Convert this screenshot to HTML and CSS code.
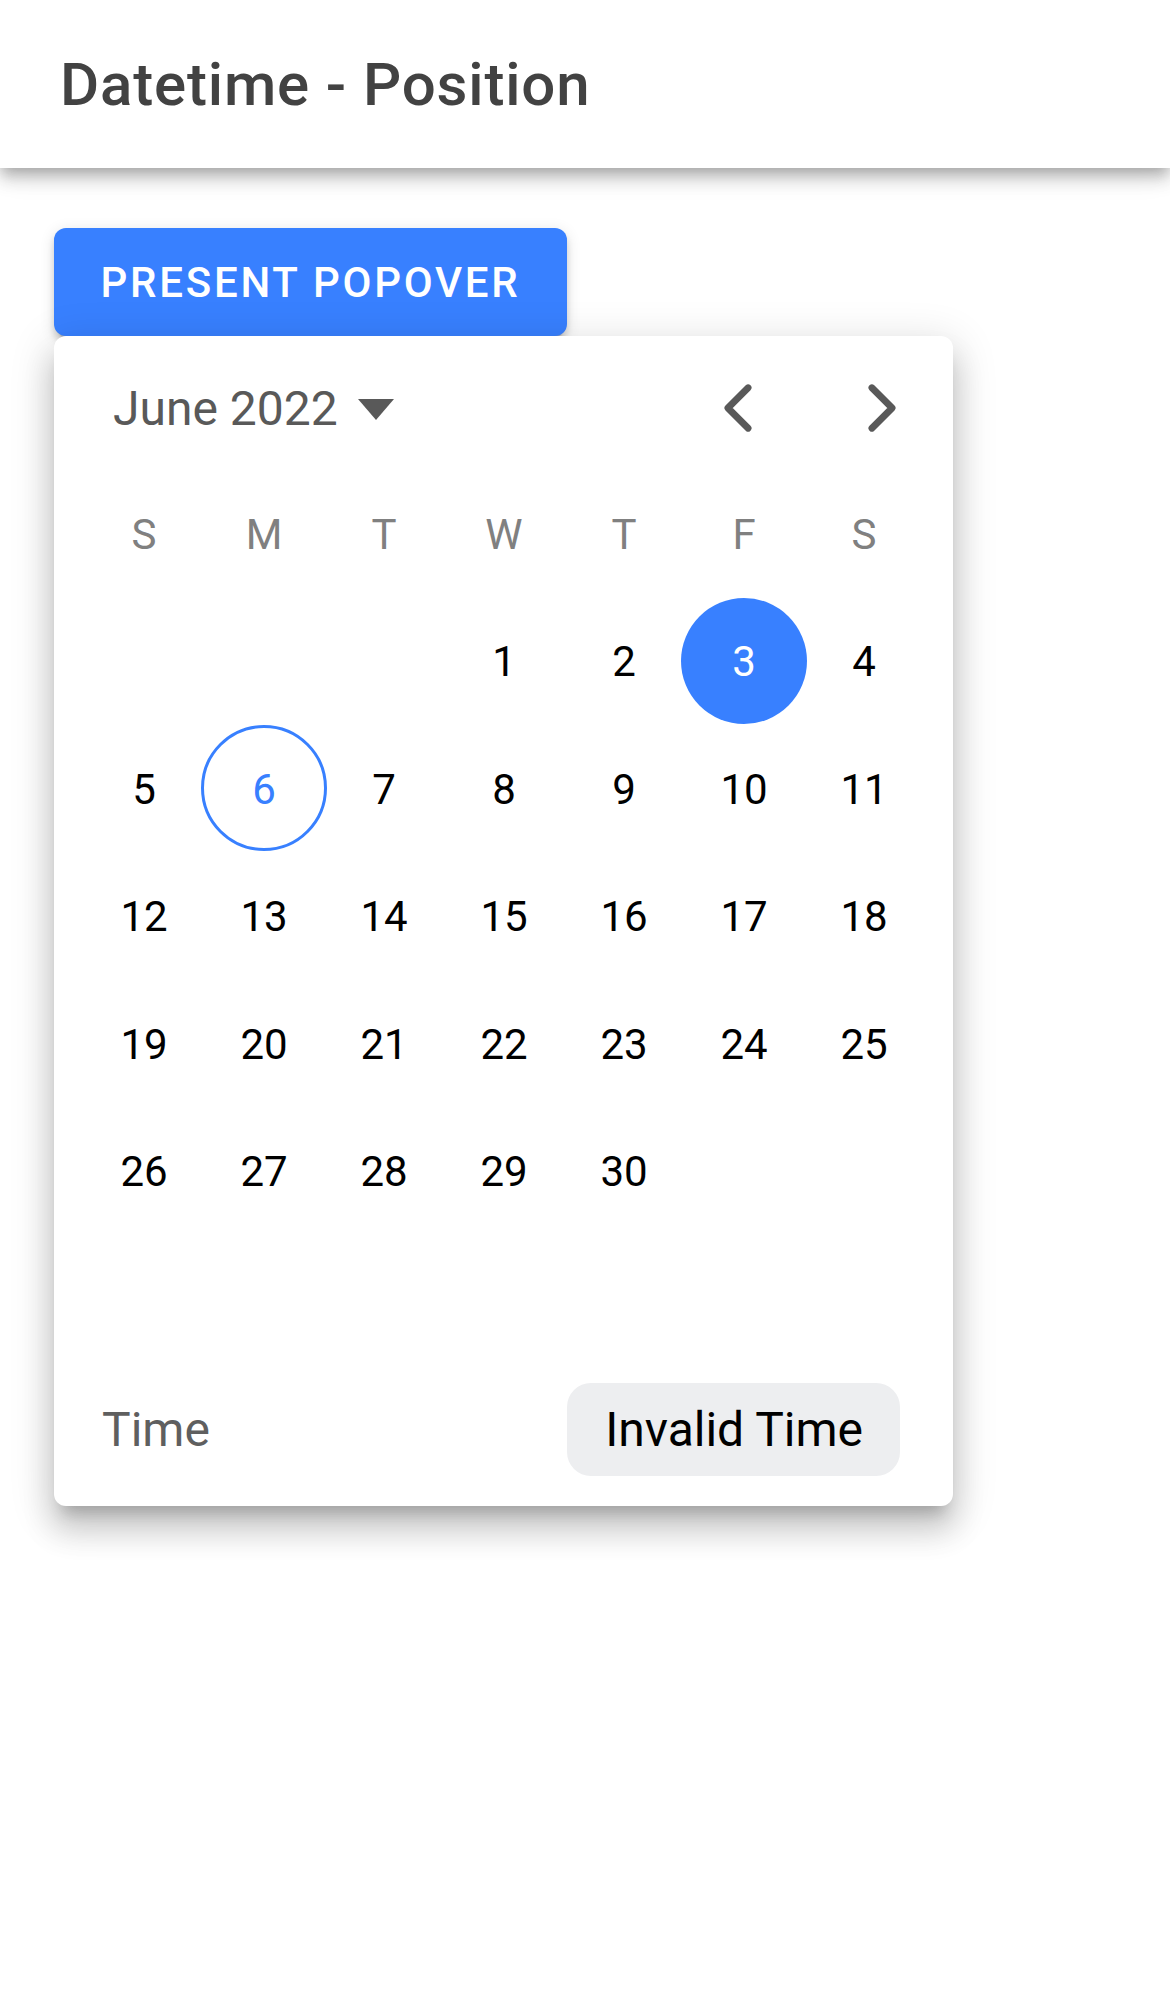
FILE: index.html
```html
<!DOCTYPE html>
<html lang="en">
<head>
<meta charset="utf-8">
<title>Datetime - Position</title>
<link rel="stylesheet" href="styles.css">
</head>
<body>
<header class="toolbar">
  <h1 class="title">Datetime - Position</h1>
</header>
<main class="content">
  <button class="btn" type="button">PRESENT POPOVER</button>
  <div class="popover">
    <div class="cal-header">
      <div class="month-year">
        <span>June 2022</span>
        <svg class="caret" viewBox="0 0 36 21" width="36" height="21"><polygon points="0,0 36,0 18,21" fill="#595959"/></svg>
      </div>
      <div class="nav">
        <svg class="chev" viewBox="0 0 512 512" width="72" height="72"><polyline points="328,112 184,256 328,400" fill="none" stroke="#595959" stroke-width="48" stroke-linecap="round" stroke-linejoin="round"/></svg>
        <svg class="chev" viewBox="0 0 512 512" width="72" height="72"><polyline points="184,112 328,256 184,400" fill="none" stroke="#595959" stroke-width="48" stroke-linecap="round" stroke-linejoin="round"/></svg>
      </div>
    </div>
    <div class="weekdays">
      <span>S</span><span>M</span><span>T</span><span>W</span><span>T</span><span>F</span><span>S</span>
    </div>
    <div class="grid">
      <span></span><span></span><span></span>
      <span class="day">1</span><span class="day">2</span><span class="day selected">3</span><span class="day">4</span>
      <span class="day">5</span><span class="day today">6</span><span class="day">7</span><span class="day">8</span><span class="day">9</span><span class="day">10</span><span class="day">11</span>
      <span class="day">12</span><span class="day">13</span><span class="day">14</span><span class="day">15</span><span class="day">16</span><span class="day">17</span><span class="day">18</span>
      <span class="day">19</span><span class="day">20</span><span class="day">21</span><span class="day">22</span><span class="day">23</span><span class="day">24</span><span class="day">25</span>
      <span class="day">26</span><span class="day">27</span><span class="day">28</span><span class="day">29</span><span class="day">30</span>
    </div>
    <div class="time-row">
      <span class="time-label">Time</span>
      <span class="time-pill">Invalid Time</span>
    </div>
  </div>
</main>
</body>
</html>
```
FILE: styles.css
```css
* { box-sizing: border-box; }
html, body {
  margin: 0;
  padding: 0;
  background: #fff;
  font-family: Roboto, "Noto Sans", "Liberation Sans", sans-serif;
}
body { width: 1170px; min-height: 1992px; position: relative; }

.toolbar {
  height: 168px;
  display: flex;
  align-items: center;
  padding-left: 60px;
  background: #fff;
  position: relative;
  z-index: 2;
  box-shadow: 0 6px 12px -3px rgba(0,0,0,.2), 0 12px 15px 0 rgba(0,0,0,.14), 0 3px 30px 0 rgba(0,0,0,.12);
}
.title {
  margin: 0;
  font-size: 60px;
  font-weight: 500;
  letter-spacing: 0.85px;
  color: #424242;
}

.content {
  position: relative;
  padding: 60px 54px;
}

.btn {
  display: block;
  height: 108px;
  width: 513px;
  padding: 0 44px;
  border: 0;
  border-radius: 12px;
  background: #3880ff;
  color: #fff;
  font-family: Roboto, "Noto Sans", sans-serif;
  font-size: 42px;
  font-weight: 500;
  letter-spacing: 2.75px;
  box-shadow: 0 9px 3px -6px rgba(0,0,0,.2), 0 6px 6px 0 rgba(0,0,0,.14), 0 3px 15px 0 rgba(0,0,0,.12);
}

.popover {
  position: absolute;
  top: 168px;
  left: 54px;
  width: 899px;
  height: 1170px;
  background: #fff;
  border-radius: 12px;
  box-shadow: 0 15px 15px -9px rgba(0,0,0,.2), 0 24px 30px 3px rgba(0,0,0,.14), 0 9px 42px 6px rgba(0,0,0,.12);
  display: flex;
  flex-direction: column;
  padding: 0 29px 0 30px;
}

.cal-header {
  height: 144px;
  display: flex;
  align-items: center;
  justify-content: space-between;
}
.month-year {
  display: flex;
  align-items: center;
  gap: 20px;
  padding-left: 29px;
  font-size: 48px;
  color: #595959;
  padding-top: 0;
}
.caret { display: block; margin-top: 2px; }
.nav {
  display: flex;
  gap: 72px;
  margin-right: 6px;
}
.chev { display: block; }

.weekdays {
  height: 108px;
  margin-bottom: 9px;
  display: grid;
  grid-template-columns: repeat(7, 120px);
  align-items: center;
  justify-items: center;
  font-size: 42px;
  color: #808080;
}

.grid {
  height: 765px;
  display: grid;
  grid-template-columns: repeat(7, 120px);
  grid-template-rows: repeat(6, 127.5px);
  align-items: center;
  justify-items: center;
}
.day {
  width: 126px;
  height: 126px;
  border-radius: 50%;
  display: flex;
  align-items: center;
  justify-content: center;
  font-size: 42px;
  color: #000;
  padding-top: 2px;
}
.day.selected { background: #3880ff; color: #fff; }
.day.today { border: 3px solid #3880ff; color: #3880ff; }

.time-row {
  height: 144px;
  display: flex;
  align-items: flex-start;
  justify-content: space-between;
  padding: 21px 24px 30px 18px;
}
.time-label {
  font-size: 48px;
  color: #5f5f5f;
  line-height: 93px;
}
.time-pill {
  height: 93px;
  padding: 0 37px 0 38px;
  border-radius: 24px;
  background: #edeef0;
  font-size: 48px;
  color: #000;
  display: flex;
  align-items: center;
}
```
